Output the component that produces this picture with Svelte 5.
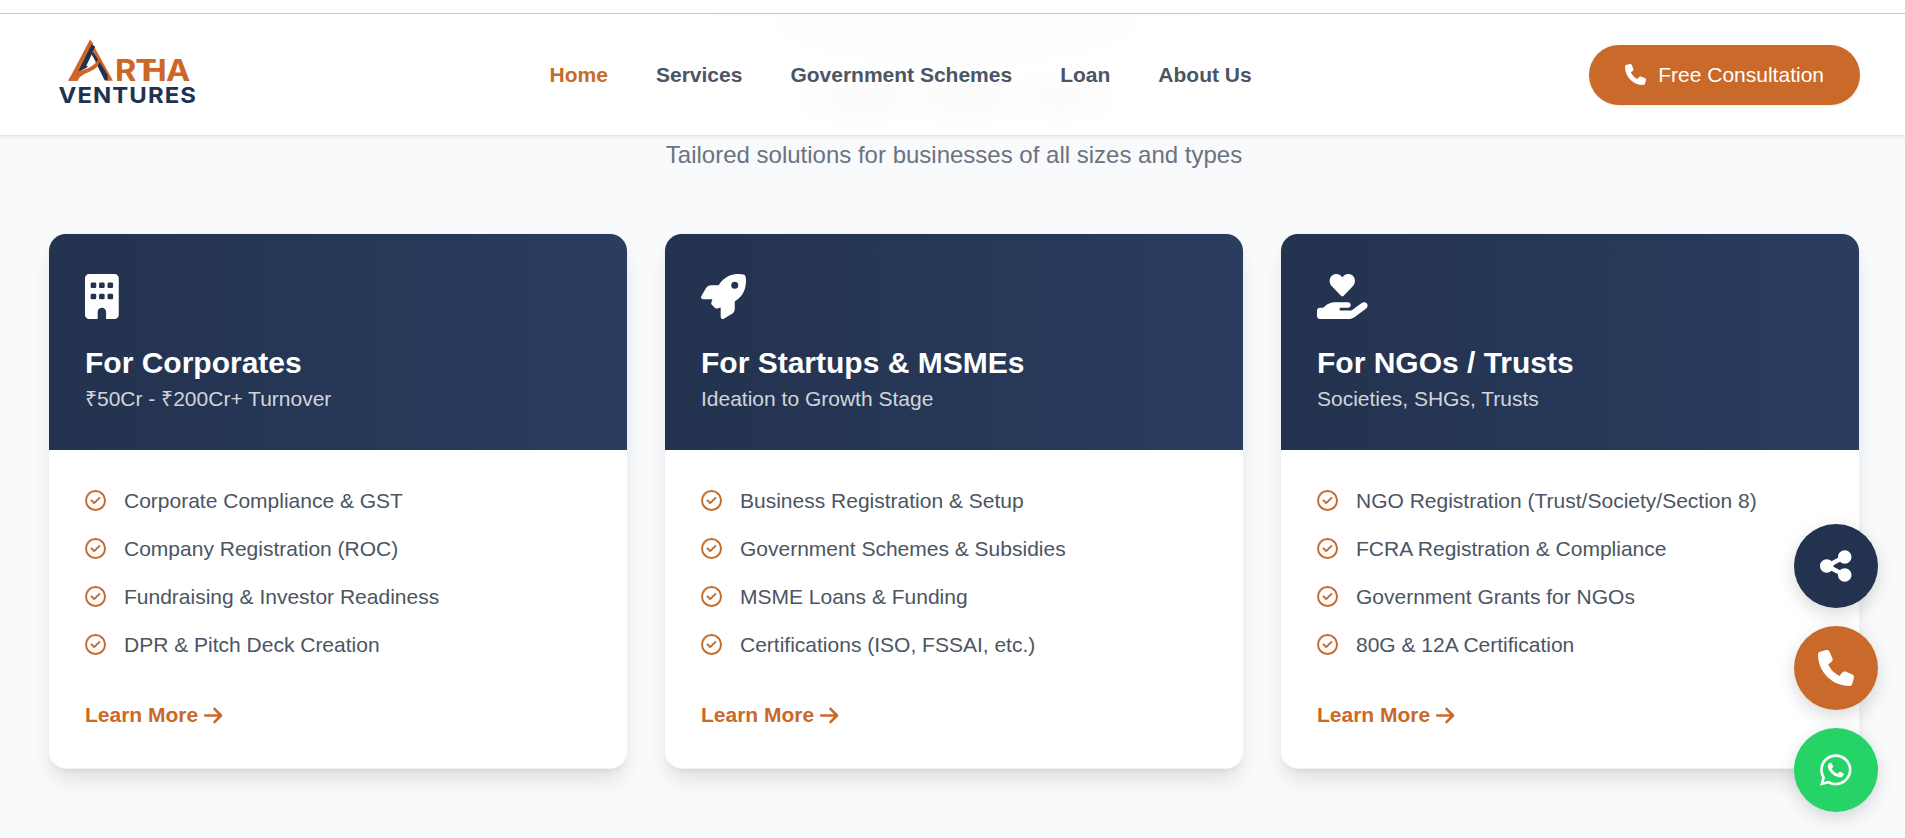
<script lang="ts">
  type Audience = {
    title: string;
    subtitle: string;
    icon: string;
    iconWidth: number;
    items: string[];
  };

  const navLinks = ['Home', 'Services', 'Government Schemes', 'Loan', 'About Us'];
  let active = $state('Home');

  const icons = {
    phone: 'M164.9 24.6c-7.7-18.6-28-28.5-47.4-23.2l-88 24C12.1 30.2 0 46 0 64C0 311.4 200.6 512 448 512c18 0 33.8-12.1 38.6-29.5l24-88c5.3-19.4-4.6-39.7-23.2-47.4l-96-40c-16.3-6.8-35.2-2.1-46.3 11.6L304.7 368C234.3 334.7 177.3 277.7 144 207.3L193.3 167c13.7-11.2 18.4-30 11.6-46.3l-40-96z',
    building: 'M48 0C21.5 0 0 21.5 0 48V464c0 26.5 21.5 48 48 48h96V432c0-26.5 21.5-48 48-48s48 21.5 48 48v80h96c26.5 0 48-21.5 48-48V48c0-26.5-21.5-48-48-48H48zM64 240c0-8.8 7.2-16 16-16h32c8.8 0 16 7.2 16 16v32c0 8.8-7.2 16-16 16H80c-8.8 0-16-7.2-16-16V240zm112-16h32c8.8 0 16 7.2 16 16v32c0 8.8-7.2 16-16 16H176c-8.8 0-16-7.2-16-16V240c0-8.8 7.2-16 16-16zm80 16c0-8.8 7.2-16 16-16h32c8.8 0 16 7.2 16 16v32c0 8.8-7.2 16-16 16H272c-8.8 0-16-7.2-16-16V240zM80 96h32c8.8 0 16 7.2 16 16v32c0 8.8-7.2 16-16 16H80c-8.8 0-16-7.2-16-16V112c0-8.8 7.2-16 16-16zm80 16c0-8.8 7.2-16 16-16h32c8.8 0 16 7.2 16 16v32c0 8.8-7.2 16-16 16H176c-8.8 0-16-7.2-16-16V112zM272 96h32c8.8 0 16 7.2 16 16v32c0 8.8-7.2 16-16 16H272c-8.8 0-16-7.2-16-16V112c0-8.8 7.2-16 16-16z',
    rocket: 'M156.6 384.9L125.7 354c-8.5-8.5-11.5-20.8-7.7-32.2c3-8.9 7-20.5 11.8-33.8L24 288c-8.6 0-16.6-4.6-20.9-12.1s-4.2-16.7 .2-24.1l52.5-88.5c13-21.9 36.5-35.3 61.9-35.3l82.3 0c2.4-4 4.8-7.7 7.2-11.3C289.1-4.1 411.1-8.1 483.9 5.3c11.6 2.1 20.6 11.2 22.8 22.8c13.4 72.9 9.3 194.8-111.4 276.7c-3.5 2.4-7.3 4.8-11.3 7.2v82.3c0 25.4-13.4 49-35.3 61.9l-88.5 52.5c-7.4 4.4-16.6 4.5-24.1 .2s-12.1-12.2-12.1-20.9V380.8c-14.1 4.9-26.4 8.9-35.7 11.9c-11.2 3.6-23.4 .5-31.8-7.8zM384 168a40 40 0 1 0 0-80 40 40 0 1 0 0 80z',
    handHeart: 'M275.2 250.5c7 7.4 18.4 7.4 25.5 0l108.9-114.2c31.6-33.2 29.8-88.2-5.6-118.8C373.2-9.3 327.3-4.9 299 24.9L288 36.4 276.9 24.9C248.7-4.9 202.8-9.3 171.9 17.4c-35.3 30.6-37.2 85.6-5.6 118.8l108.9 114.3zM568.2 336.3c13.1 17.8 9.3 42.8-8.5 55.9L433.1 485.5c-23.4 17.2-51.6 26.5-80.7 26.5H32c-17.7 0-32-14.3-32-32V416c0-17.7 14.3-32 32-32H68.8l44.9-36c22.7-18.2 50.9-28 80-28H352c17.7 0 32 14.3 32 32s-14.3 32-32 32H272c-8.8 0-16 7.2-16 16s7.2 16 16 16H392.6l119.7-88.2c17.8-13.1 42.8-9.3 55.9 8.5z',
    check: 'M256 48a208 208 0 1 1 0 416 208 208 0 1 1 0-416zm0 464A256 256 0 1 0 256 0a256 256 0 1 0 0 512zM369 209c9.4-9.4 9.4-24.6 0-33.9s-24.6-9.4-33.9 0l-111 111-47-47c-9.4-9.4-24.6-9.4-33.9 0s-9.4 24.6 0 33.9l64 64c9.4 9.4 24.6 9.4 33.9 0L369 209z',
    arrow: 'M438.6 278.6c12.5-12.5 12.5-32.8 0-45.3l-160-160c-12.5-12.5-32.8-12.5-45.3 0s-12.5 32.8 0 45.3L338.8 224 32 224c-17.7 0-32 14.3-32 32s14.3 32 32 32l306.7 0L233.4 393.4c-12.5 12.5-12.5 32.8 0 45.3s32.8 12.5 45.3 0l160-160z',
    share: 'M352 224c53 0 96-43 96-96s-43-96-96-96s-96 43-96 96c0 4 .2 8 .7 11.9l-94.1 47C145.4 170.2 121.9 160 96 160c-53 0-96 43-96 96s43 96 96 96c25.9 0 49.4-10.2 66.6-26.9l94.1 47c-.5 3.9-.7 7.8-.7 11.9c0 53 43 96 96 96s96-43 96-96s-43-96-96-96c-25.9 0-49.4 10.2-66.6 26.9l-94.1-47c.5-3.9 .7-7.8 .7-11.9s-.2-8-.7-11.9l94.1-47C302.6 213.8 326.1 224 352 224z',
    whatsapp: 'M380.9 97.1C339 55.1 283.2 32 223.9 32c-122.4 0-222 99.6-222 222 0 39.1 10.2 77.3 29.6 111L0 480l117.7-30.9c32.4 17.7 68.9 27 106.1 27h.1c122.3 0 224.1-99.6 224.1-222 0-59.3-25.2-115-67.1-157zm-157 341.6c-33.2 0-65.7-8.9-94-25.7l-6.7-4-69.8 18.3L72 359.2l-4.4-7c-18.5-29.4-28.2-63.3-28.2-98.2 0-101.7 82.8-184.5 184.6-184.5 49.3 0 95.6 19.2 130.4 54.1 34.8 34.9 56.2 81.2 56.1 130.5 0 101.8-84.9 184.6-186.6 184.6zm101.2-138.2c-5.5-2.8-32.8-16.2-37.9-18-5.1-1.9-8.8-2.8-12.5 2.8-3.7 5.6-14.3 18-17.6 21.8-3.2 3.7-6.5 4.2-12 1.4-32.6-16.3-54-29.1-75.5-66-5.7-9.8 5.7-9.1 16.3-30.3 1.8-3.7.9-6.9-.5-9.7-1.4-2.8-12.5-30.1-17.1-41.2-4.5-10.8-9.1-9.3-12.5-9.5-3.2-.2-6.9-.2-10.6-.2-3.7 0-9.7 1.4-14.8 6.9-5.1 5.6-19.4 19-19.4 46.3 0 27.3 19.9 53.7 22.6 57.4 2.8 3.7 39.1 59.7 94.8 83.8 35.2 15.2 49 16.5 66.6 13.9 10.7-1.6 32.8-13.4 37.4-26.4 4.6-13 4.6-24.1 3.2-26.4-1.3-2.5-5-3.9-10.5-6.6z'
  };

  const audiences: Audience[] = [
    {
      title: 'For Corporates',
      subtitle: '₹50Cr - ₹200Cr+ Turnover',
      icon: icons.building,
      iconWidth: 384,
      items: [
        'Corporate Compliance & GST',
        'Company Registration (ROC)',
        'Fundraising & Investor Readiness',
        'DPR & Pitch Deck Creation'
      ]
    },
    {
      title: 'For Startups & MSMEs',
      subtitle: 'Ideation to Growth Stage',
      icon: icons.rocket,
      iconWidth: 512,
      items: [
        'Business Registration & Setup',
        'Government Schemes & Subsidies',
        'MSME Loans & Funding',
        'Certifications (ISO, FSSAI, etc.)'
      ]
    },
    {
      title: 'For NGOs / Trusts',
      subtitle: 'Societies, SHGs, Trusts',
      icon: icons.handHeart,
      iconWidth: 576,
      items: [
        'NGO Registration (Trust/Society/Section 8)',
        'FCRA Registration & Compliance',
        'Government Grants for NGOs',
        '80G & 12A Certification'
      ]
    }
  ];
</script>

{#snippet icon(path: string, width: number)}
  <svg class="icon" viewBox="0 0 {width} 512" style="width: {width / 512}em" aria-hidden="true">
    <path d={path} />
  </svg>
{/snippet}

<div class="viewport">
  <div class="page">
    <div class="strip"></div>
    <header class="header">
      <a class="logo" href="#home" aria-label="Artha Ventures">
        <svg width="164" height="76" viewBox="0 0 164 76">
          <g transform="translate(7 -1.5) scale(0.3333)">
            <path class="orange" d="M105 12 40 136h28L115 24z" />
            <path class="navy" d="M110 26 70 107q16-3 29-13l-5-3 27-57z" />
            <path class="orange" d="M119 36 174 136h-22L112 50z" />
            <path class="navy" d="M113 49 110 57 149 134h9V118L123 62z" />
            <path class="orange" d="M40 136C55 97 105 114 132 70c8 42-54 36-64 66z" />
            <path class="blank" d="M112 61 122 79Q110 88 95 91z" />
          </g>
          <text class="word artha" x="61 79.3 85.8 107.3" y="44" transform="scale(1.1 1)">RTHA</text>
          <text class="word ventures" x="10.5" y="66" textLength="138.5" lengthAdjust="spacingAndGlyphs">VENTURES</text>
        </svg>
      </a>
      <nav class="nav">
        {#each navLinks as link}
          <a href="#{link}" class:active={active === link} onclick={() => (active = link)}>{link}</a>
        {/each}
      </nav>
      <button class="cta">{@render icon(icons.phone, 512)}<span>Free Consultation</span></button>
    </header>

    <main class="section">
      <p class="lead">Tailored solutions for businesses of all sizes and types</p>
      <div class="cards">
        {#each audiences as audience}
          <article class="card">
            <div class="card-head">
              <div class="card-icon">{@render icon(audience.icon, audience.iconWidth)}</div>
              <h3>{audience.title}</h3>
              <p>{audience.subtitle}</p>
            </div>
            <div class="card-body">
              <ul>
                {#each audience.items as item}
                  <li>{@render icon(icons.check, 512)}<span>{item}</span></li>
                {/each}
              </ul>
              <a class="more" href="#services"><span>Learn More</span>{@render icon(icons.arrow, 448)}</a>
            </div>
          </article>
        {/each}
      </div>
    </main>

    <div class="floating">
      <button class="share" aria-label="Share">{@render icon(icons.share, 448)}</button>
      <button class="call" aria-label="Call">{@render icon(icons.phone, 512)}</button>
      <button class="whatsapp" aria-label="WhatsApp">{@render icon(icons.whatsapp, 448)}</button>
    </div>
  </div>
</div>

<style>
  :global(body) {
    margin: 0;
  }
  .viewport {
    height: 838px;
    overflow: hidden;
    font-family: "Liberation Sans", Arial, sans-serif;
    font-size: 21px;
    line-height: 30px;
    color: #4b5563;
    background: #f9fafc;
  }
  .page {
    position: relative;
    width: 1908px;
    height: 838px;
  }
  h3, p, ul {
    margin: 0;
    padding: 0;
  }
  a {
    text-decoration: none;
    color: inherit;
  }
  button {
    border: 0;
    font: inherit;
    color: #fff;
    cursor: pointer;
  }
  .icon {
    height: 1em;
    flex: none;
    fill: currentColor;
    overflow: visible;
    display: block;
  }
  .strip {
    height: 13px;
    background: #fff;
    border-bottom: 1px solid #c9cacc;
  }
  .header {
    position: relative;
    box-sizing: border-box;
    height: 122px;
    padding: 0 48px;
    display: flex;
    align-items: center;
    justify-content: space-between;
    /* faint tint of the heading scrolled under the bar */
    background:
      radial-gradient(ellipse 75px 32px at 862px 84px, #fafafb, transparent),
      radial-gradient(ellipse 75px 32px at 965px 84px, #fafafb, transparent),
      radial-gradient(ellipse 65px 32px at 1060px 84px, #fbfbfb, transparent),
      radial-gradient(ellipse 260px 60px at 955px 10px, #fefdfb, transparent),
      #fff;
    border-bottom: 1px solid #e5e7eb;
    box-shadow: 0 1px 4px rgba(0, 0, 0, 0.08);
  }
  .logo svg {
    display: block;
  }
  .orange, .artha {
    fill: #cd6728;
  }
  .navy, .ventures {
    fill: #22314f;
  }
  .blank {
    fill: #fff;
  }
  .word {
    font-family: Inter, "Open Sans", sans-serif;
    font-weight: 700;
  }
  .artha {
    font-size: 29.5px;
  }
  .ventures {
    font-size: 22px;
    letter-spacing: 1px;
  }
  .nav {
    display: flex;
    gap: 48px;
    font-weight: 700;
  }
  .nav .active {
    color: #c96a2a;
  }
  .cta {
    display: flex;
    align-items: center;
    gap: 12px;
    padding: 15px 36px;
    border-radius: 30px;
    background: #c96a2a;
    box-shadow: 0 1px 3px rgba(0, 0, 0, 0.08);
  }
  .section {
    padding: 1px 48px 0;
  }
  .lead {
    font-size: 24px;
    line-height: 36px;
    text-align: center;
    color: #6b7280;
  }
  .cards {
    display: grid;
    grid-template-columns: repeat(3, 1fr);
    gap: 36px;
    margin-top: 60px;
  }
  .card {
    border: 1px solid #f1f2f4;
    border-radius: 18px;
    overflow: hidden;
    background: #fff;
    box-shadow: 0 15px 22px -4px rgba(0, 0, 0, 0.1), 0 6px 9px -6px rgba(0, 0, 0, 0.1);
  }
  .card-head {
    padding: 36px;
    color: #fff;
    background: linear-gradient(to right, #23324e, #2a3c60);
  }
  .card-icon {
    box-sizing: border-box;
    height: 54px;
    padding-top: 3.5px;
    margin-bottom: 18px;
    font-size: 45px;
  }
  h3 {
    font-size: 30px;
    line-height: 41px;
    margin-bottom: 1px;
  }
  .card-head p {
    color: #d1d5db;
  }
  .card-body {
    padding: 36px;
  }
  ul {
    display: grid;
    gap: 18px;
    list-style: none;
  }
  li {
    display: flex;
    align-items: flex-start;
    gap: 18px;
  }
  li .icon {
    margin-top: 3.5px;
    color: #c96a2a;
  }
  .more {
    display: flex;
    align-items: center;
    gap: 6px;
    height: 34px;
    margin-top: 38px;
    font-weight: 700;
    color: #c96a2a;
  }
  .floating {
    position: absolute;
    right: 30px;
    bottom: 26px;
    display: grid;
    gap: 18px;
  }
  .floating button {
    display: flex;
    align-items: center;
    justify-content: center;
    width: 84px;
    height: 84px;
    padding: 0;
    border-radius: 50%;
    font-size: 36px;
    box-shadow: 0 6px 18px rgba(0, 0, 0, 0.15);
  }
  .share {
    background: #23324e;
  }
  .call {
    background: #c96a2a;
  }
  .whatsapp {
    background: #25d366;
  }
</style>
